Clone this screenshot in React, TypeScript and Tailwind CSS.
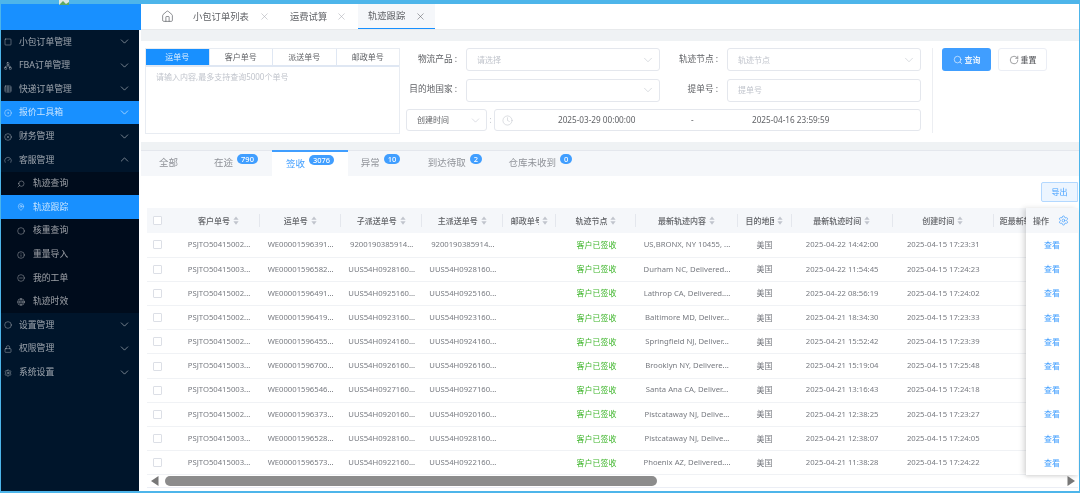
import { ChevronDown, ChevronUp, CircleX, Clock, Home, Search, RotateCw, Settings, MapPin, Lock, Globe, Square, Network, Table, CircleDot, Gauge, Circle, X, Info, CircleMinus } from "lucide-react"

const font = "font-['Noto_Sans','Noto_Sans_CJK_SC',sans-serif]"

const menu = [
  { label: "小包订单管理", icon: Square, chevron: "down" },
  { label: "FBA订单管理", icon: Network, chevron: "down" },
  { label: "快递订单管理", icon: Table, chevron: "down" },
  { label: "报价工具箱", icon: CircleDot, chevron: "down", active: true },
  { label: "财务管理", icon: CircleX, chevron: "down" },
  { label: "客服管理", icon: Gauge, chevron: "up" },
  { label: "轨迹查询", icon: Search, sub: true, flip: true },
  { label: "轨迹跟踪", icon: MapPin, sub: true, active: true },
  { label: "核重查询", icon: Circle, sub: true },
  { label: "重量导入", icon: Info, sub: true },
  { label: "我的工单", icon: CircleMinus, sub: true },
  { label: "轨迹时效", icon: Globe, sub: true },
  { label: "设置管理", icon: Circle, chevron: "down" },
  { label: "权限管理", icon: Lock, chevron: "down" },
  { label: "系统设置", icon: Settings, chevron: "down" },
]

const rows = [
  ["PSJTO50415002...", "WE00001596391...", "9200190385914...", "9200190385914...", "US,BRONX, NY 10455, ...", "2025-04-22 14:42:00", "2025-04-15 17:23:31"],
  ["PSJTO50415003...", "WE00001596582...", "UUS54H0928160...", "UUS54H0928160...", "Durham NC, Delivered...", "2025-04-22 11:54:45", "2025-04-15 17:24:23"],
  ["PSJTO50415002...", "WE00001596491...", "UUS54H0925160...", "UUS54H0925160...", "Lathrop CA, Delivered....", "2025-04-22 08:56:19", "2025-04-15 17:24:02"],
  ["PSJTO50415002...", "WE00001596419...", "UUS54H0923160...", "UUS54H0923160...", "Baltimore MD, Deliver...", "2025-04-21 18:34:30", "2025-04-15 17:23:33"],
  ["PSJTO50415002...", "WE00001596455...", "UUS54H0924160...", "UUS54H0924160...", "Springfield NJ, Deliver...", "2025-04-21 15:52:42", "2025-04-15 17:23:39"],
  ["PSJTO50415003...", "WE00001596700...", "UUS54H0926160...", "UUS54H0926160...", "Brooklyn NY, Delivere...", "2025-04-21 15:19:04", "2025-04-15 17:25:48"],
  ["PSJTO50415003...", "WE00001596546...", "UUS54H0927160...", "UUS54H0927160...", "Santa Ana CA, Deliver...", "2025-04-21 13:16:43", "2025-04-15 17:24:18"],
  ["PSJTO50415002...", "WE00001596373...", "UUS54H0920160...", "UUS54H0920160...", "Pistcataway NJ, Delive...", "2025-04-21 12:38:25", "2025-04-15 17:23:27"],
  ["PSJTO50415003...", "WE00001596528...", "UUS54H0928160...", "UUS54H0928160...", "Pistcataway NJ, Delive...", "2025-04-21 12:38:07", "2025-04-15 17:24:05"],
  ["PSJTO50415003...", "WE00001596573...", "UUS54H0922160...", "UUS54H0922160...", "Phoenix AZ, Delivered....", "2025-04-21 11:38:28", "2025-04-15 17:24:22"],
]

const headers = [
  { label: "客户单号", width: "w-[82px]" },
  { label: "运单号", width: "w-[81px]" },
  { label: "子派送单号", width: "w-[81px]" },
  { label: "主派送单号", width: "w-[81px]" },
  { label: "邮政单号", width: "w-[53px]", cut: true },
  { label: "轨迹节点", width: "w-[80px]" },
  { label: "最新轨迹内容", width: "w-[101px]" },
  { label: "目的地国家", width: "w-[54px]", cut: true },
  { label: "最新轨迹时间", width: "w-[101px]" },
  { label: "创建时间", width: "w-[101px]" },
  { label: "距最新轨迹天数", width: "w-[80px]", noSort: true },
]

const tabs = [
  { label: "全部", pad: "w-[55px]" },
  { label: "在途", count: "790", pad: "w-[76px] pl-[4px]" },
  { label: "签收", count: "3076", pad: "w-[76px]", active: true },
  { label: "异常", count: "10", pad: "w-[65px]" },
  { label: "到达待取", count: "2", pad: "w-[84px]" },
  { label: "仓库未收到", count: "0", pad: "w-[87px]" },
]

function SortIcon() {
  return (
    <svg viewBox="0 0 8 12" className="w-[6px] h-[9px] ml-[3px] shrink-0 fill-[#c0c4cc]">
      <path d="M4 0.5 7.5 5H0.5z" />
      <path d="M4 11.5 0.5 7h7z" />
    </svg>
  )
}

function Checkbox() {
  return <span className="block w-[9px] h-[9px] border border-[#dcdfe6] rounded-[1px] bg-white" />
}

function Field({ label, placeholder, caret }: { label: string; placeholder?: string; caret?: boolean }) {
  return (
    <div className="flex items-center h-[23px]">
      <span className="w-[52px] mr-[9px] text-right text-[8.7px] text-[#606266] whitespace-nowrap flex justify-end">
        {label}
        <span className="ml-[2px]">:</span>
      </span>
      <div className="flex-1 h-[23px] border border-[#e4e7ed] rounded-[3px] flex items-center justify-between pl-[10px] pr-[4px]">
        <span className="text-[8px] text-[#c0c4cc]">{placeholder}</span>
        {caret && <ChevronDown className="w-[14px] h-[14px] text-[#c0c4cc]" strokeWidth={1} />}
      </div>
    </div>
  )
}

export default function App() {
  return (
    <div className={`${font} w-[1080px] h-[493px] overflow-hidden flex flex-col bg-[#4db5ea] pt-[4px] px-[1px] pb-[2px] blur-[0.3px]`}>
      <div className="flex flex-1 min-h-0 bg-white">
        <aside className="w-[140px] shrink-0 flex flex-col">
          <div className="h-[26px] bg-[#1890ff] shrink-0 relative">
            <svg viewBox="0 0 10 5" className="absolute left-[58px] top-[-4px] w-[10px] h-[5px]">
              <rect width="10" height="5" fill="#dfe8e4" />
              <path d="M0 5 4 1l3 3 3-2v3z" fill="#5fa860" />
            </svg>
          </div>
          <nav className="w-[138px] flex-1 bg-[#00152b] flex flex-col">
            {menu.map((m) => {
              const Icon = m.icon
              return (
                <div
                  key={m.label}
                  className={`h-[23.6px] pt-[1px] flex items-center shrink-0 ${m.active ? "bg-[#1890ff] text-white/75" : m.sub ? "bg-[#000c1c] text-white/60" : "text-white/60"} ${m.sub ? "pl-[16px]" : "pl-[3px]"}`}
                >
                  <Icon className={`w-[8px] h-[8px] shrink-0 ${m.sub ? "mr-[8px]" : "mr-[7px]"} ${m.flip ? "-scale-x-100" : ""}`} strokeWidth={1.6} />
                  <span className="text-[8.8px] whitespace-nowrap">{m.label}</span>
                  {m.chevron === "down" && <ChevronDown className="w-[13px] h-[13px] ml-auto mr-[8px] -mt-[1px]" strokeWidth={1.4} />}
                  {m.chevron === "up" && <ChevronUp className="w-[13px] h-[13px] ml-auto mr-[8px] -mt-[1px]" strokeWidth={1.4} />}
                </div>
              )
            })}
          </nav>
        </aside>

        <main className="flex-1 min-w-0 flex flex-col bg-[#eff2f4]">
          <div className="h-[26px] bg-white flex items-stretch shrink-0 border-b border-[#e8eaec]">
            <div className="w-[52px] flex items-center justify-center text-[#606266]">
              <Home className="w-[13px] h-[13px]" strokeWidth={1.3} />
            </div>
            <div className="w-[97px] flex items-center text-[9.3px] text-[#606266]">
              小包订单列表
              <X className="w-[11px] h-[11px] ml-[10px] text-[#a8abb2]" strokeWidth={1.2} />
            </div>
            <div className="w-[68px] flex items-center text-[9.3px] text-[#606266]">
              运费试算
              <X className="w-[11px] h-[11px] ml-[9px] text-[#a8abb2]" strokeWidth={1.2} />
            </div>
            <div className="w-[77px] flex items-center pl-[10px] text-[9.3px] text-[#606266] bg-[#f5f7fa] border-b border-[#1890ff]">
              轨迹跟踪
              <X className="w-[11px] h-[11px] ml-[10px] text-[#606266]" strokeWidth={1.2} />
            </div>
          </div>

          <section className="mt-[11px] h-[101px] shrink-0 bg-white flex pl-[4px] pt-[7px]">
            <div className="w-[255px] h-[86px] border border-[#e8ecf2] flex flex-col shrink-0">
              <div className="h-[18px] flex border-b-2 border-[#dfe7f3] shrink-0">
                {["运单号", "客户单号", "派送单号", "邮政单号"].map((t, i) => (
                  <div
                    key={t}
                    className={`flex-1 flex items-center justify-center text-[8px] ${i === 0 ? "bg-[#1890ff] text-white/85" : "text-[#606266] border-l border-[#dfe7f3]"}`}
                  >
                    {t}
                  </div>
                ))}
              </div>
              <div className="pl-[10px] pt-[4px] text-[8px] text-[#c0c4cc] leading-[12px]">请输入内容,最多支持查询5000个单号</div>
            </div>

            <div className="w-[516px] ml-[5px] flex flex-col gap-[7.5px] shrink-0">
              <div className="grid grid-cols-2 gap-x-[6px]">
                <Field label="物流产品" placeholder="请选择" caret />
                <Field label="轨迹节点" placeholder="轨迹节点" caret />
              </div>
              <div className="grid grid-cols-2 gap-x-[6px]">
                <Field label="目的地国家" caret />
                <Field label="提单号" placeholder="提单号" />
              </div>
              <div className="flex items-center h-[22px]">
                <div className="w-[81px] h-[22px] ml-[1px] border border-[#e4e7ed] rounded-[3px] flex items-center justify-between pl-[10px] pr-[4px] text-[8px] text-[#606266]">
                  创建时间
                  <ChevronDown className="w-[13px] h-[13px] text-[#c0c4cc]" strokeWidth={1} />
                </div>
                <span className="w-[7px] text-center text-[8px] text-[#c0c4cc]">:</span>
                <div className="flex-1 h-[22px] border border-[#e4e7ed] rounded-[3px] flex items-center text-[8.2px] text-[#606266] pl-[7px]">
                  <Clock className="w-[11px] h-[11px] text-[#c0c4cc] shrink-0" strokeWidth={1.2} />
                  <span className="ml-[45px] w-[76px] whitespace-nowrap">2025-03-29 00:00:00</span>
                  <span className="ml-[57px] w-[4px]">-</span>
                  <span className="ml-[57px] whitespace-nowrap">2025-04-16 23:59:59</span>
                </div>
              </div>
            </div>

            <div className="w-px h-[85px] bg-[#eceef2] ml-[11px] shrink-0" />
            <div className="flex items-start gap-[7px] pl-[9px]">
              <button className="w-[49px] h-[23px] bg-[#409eff] rounded-[3px] flex items-center justify-center text-white text-[8px] font-medium">
                <Search className="w-[10px] h-[10px] mr-[2px]" strokeWidth={1.4} />
                查询
              </button>
              <button className="w-[49px] h-[23px] bg-white border border-[#ebeef5] rounded-[3px] flex items-center justify-center text-[#606266] text-[8px] font-medium">
                <RotateCw className="w-[10px] h-[10px] mr-[2px]" strokeWidth={1.4} />
                重置
              </button>
            </div>
          </section>

          <section className="mt-[8px] flex-1 min-h-0 bg-white flex flex-col">
            <div className="h-[26px] flex bg-[#f5f7fa] shrink-0 border-t border-[#e4e7ed]">
              {tabs.map((t) => (
                <div
                  key={t.label}
                  className={`${t.pad} flex items-center justify-center text-[9.5px] h-[26px] -mt-px ${t.active ? "bg-white border-t-2 border-[#409eff] text-[#409eff]" : "text-[#909399]"}`}
                >
                  <span className="whitespace-nowrap">{t.label}</span>
                  {t.count && (
                    <span className="bg-[#409eff] text-white text-[7.5px] leading-[10px] rounded-full px-[4px] ml-[4px] -mt-[8px] font-medium">
                      {t.count}
                    </span>
                  )}
                </div>
              ))}
            </div>

            <div className="flex justify-end pt-[6px] pr-[1px] h-[32px] shrink-0">
              <button className="w-[37px] h-[20px] bg-[#ecf5ff] border border-[#b3d8ff] rounded-l-[2px] text-[#409eff] text-[8px]">导出</button>
            </div>

            <div className="ml-[6px] mr-[1px] flex-1 min-h-0 flex flex-col">
              <div className="flex items-start min-h-0">
                <div className="flex-1 min-w-0 overflow-hidden">
                  <table className="table-fixed border-collapse w-[927px]">
                    <colgroup>
                      <col className="w-[31px]" />
                      {headers.map((h) => (
                        <col key={h.label} className={h.width} />
                      ))}
                    </colgroup>
                    <thead>
                      <tr className="h-[25px] bg-[#f5f7fa]">
                        <th className="pl-[6px]">
                          <Checkbox />
                        </th>
                        {headers.map((h) => (
                          <th key={h.label} className="p-0">
                            <div className={`flex items-center h-[13px] border-r border-[#e4e7ed] px-[3px] text-[8px] font-medium text-[#606266] whitespace-nowrap overflow-hidden ${h.noSort ? "justify-start pl-[6px]" : "justify-center"}`}>
                              <span className={h.cut ? "overflow-hidden max-w-[28px]" : ""}>{h.label}</span>
                              {!h.noSort && <SortIcon />}
                            </div>
                          </th>
                        ))}
                      </tr>
                    </thead>
                    <tbody>
                      {rows.map((r) => (
                        <tr key={r[1]} className="h-[24.2px] border-b border-[#f0f2f5] text-[7.7px] text-[#777a80] text-center">
                          <td className="pl-[6px]">
                            <Checkbox />
                          </td>
                          <td className="whitespace-nowrap">{r[0]}</td>
                          <td className="whitespace-nowrap">{r[1]}</td>
                          <td className="whitespace-nowrap">{r[2]}</td>
                          <td className="whitespace-nowrap">{r[3]}</td>
                          <td />
                          <td className="whitespace-nowrap text-[8px] text-[#3fb62c]">客户已签收</td>
                          <td className="whitespace-nowrap">{r[4]}</td>
                          <td className="whitespace-nowrap text-[8px]">美国</td>
                          <td className="whitespace-nowrap">{r[5]}</td>
                          <td className="whitespace-nowrap">{r[6]}</td>
                          <td />
                        </tr>
                      ))}
                    </tbody>
                  </table>
                </div>
                <div className="w-[52px] shrink-0 bg-white shadow-[-3px_0_5px_rgba(0,0,0,0.12),0_2px_3px_rgba(0,0,0,0.08)] z-10">
                  <div className="h-[25px] bg-[#f5f7fa] flex items-center pl-[7px] text-[8px] font-medium text-[#606266]">
                    操作
                    <Settings className="w-[11px] h-[11px] ml-[9px] text-[#409eff]" strokeWidth={1.5} />
                  </div>
                  {rows.map((r) => (
                    <div key={r[1]} className="h-[24.2px] flex items-center justify-center text-[8px] text-[#409eff]">
                      查看
                    </div>
                  ))}
                </div>
              </div>
              <div className="h-[13px] flex items-center shrink-0 gap-[6px] border-b border-[#ebeef5]">
                <svg viewBox="0 0 8 10" className="w-[8px] h-[10px] fill-[#777] ml-[4px] shrink-0">
                  <path d="M7.5 0v10L0 5z" />
                </svg>
                <div className="flex-1 h-[10px]">
                  <div className="w-[492px] h-[10px] rounded-full bg-[#8c8c8c]" />
                </div>
                <svg viewBox="0 0 8 10" className="w-[8px] h-[10px] fill-[#777] mr-[3px] shrink-0">
                  <path d="M.5 0v10L8 5z" />
                </svg>
              </div>
            </div>
          </section>
        </main>
      </div>
    </div>
  )
}
